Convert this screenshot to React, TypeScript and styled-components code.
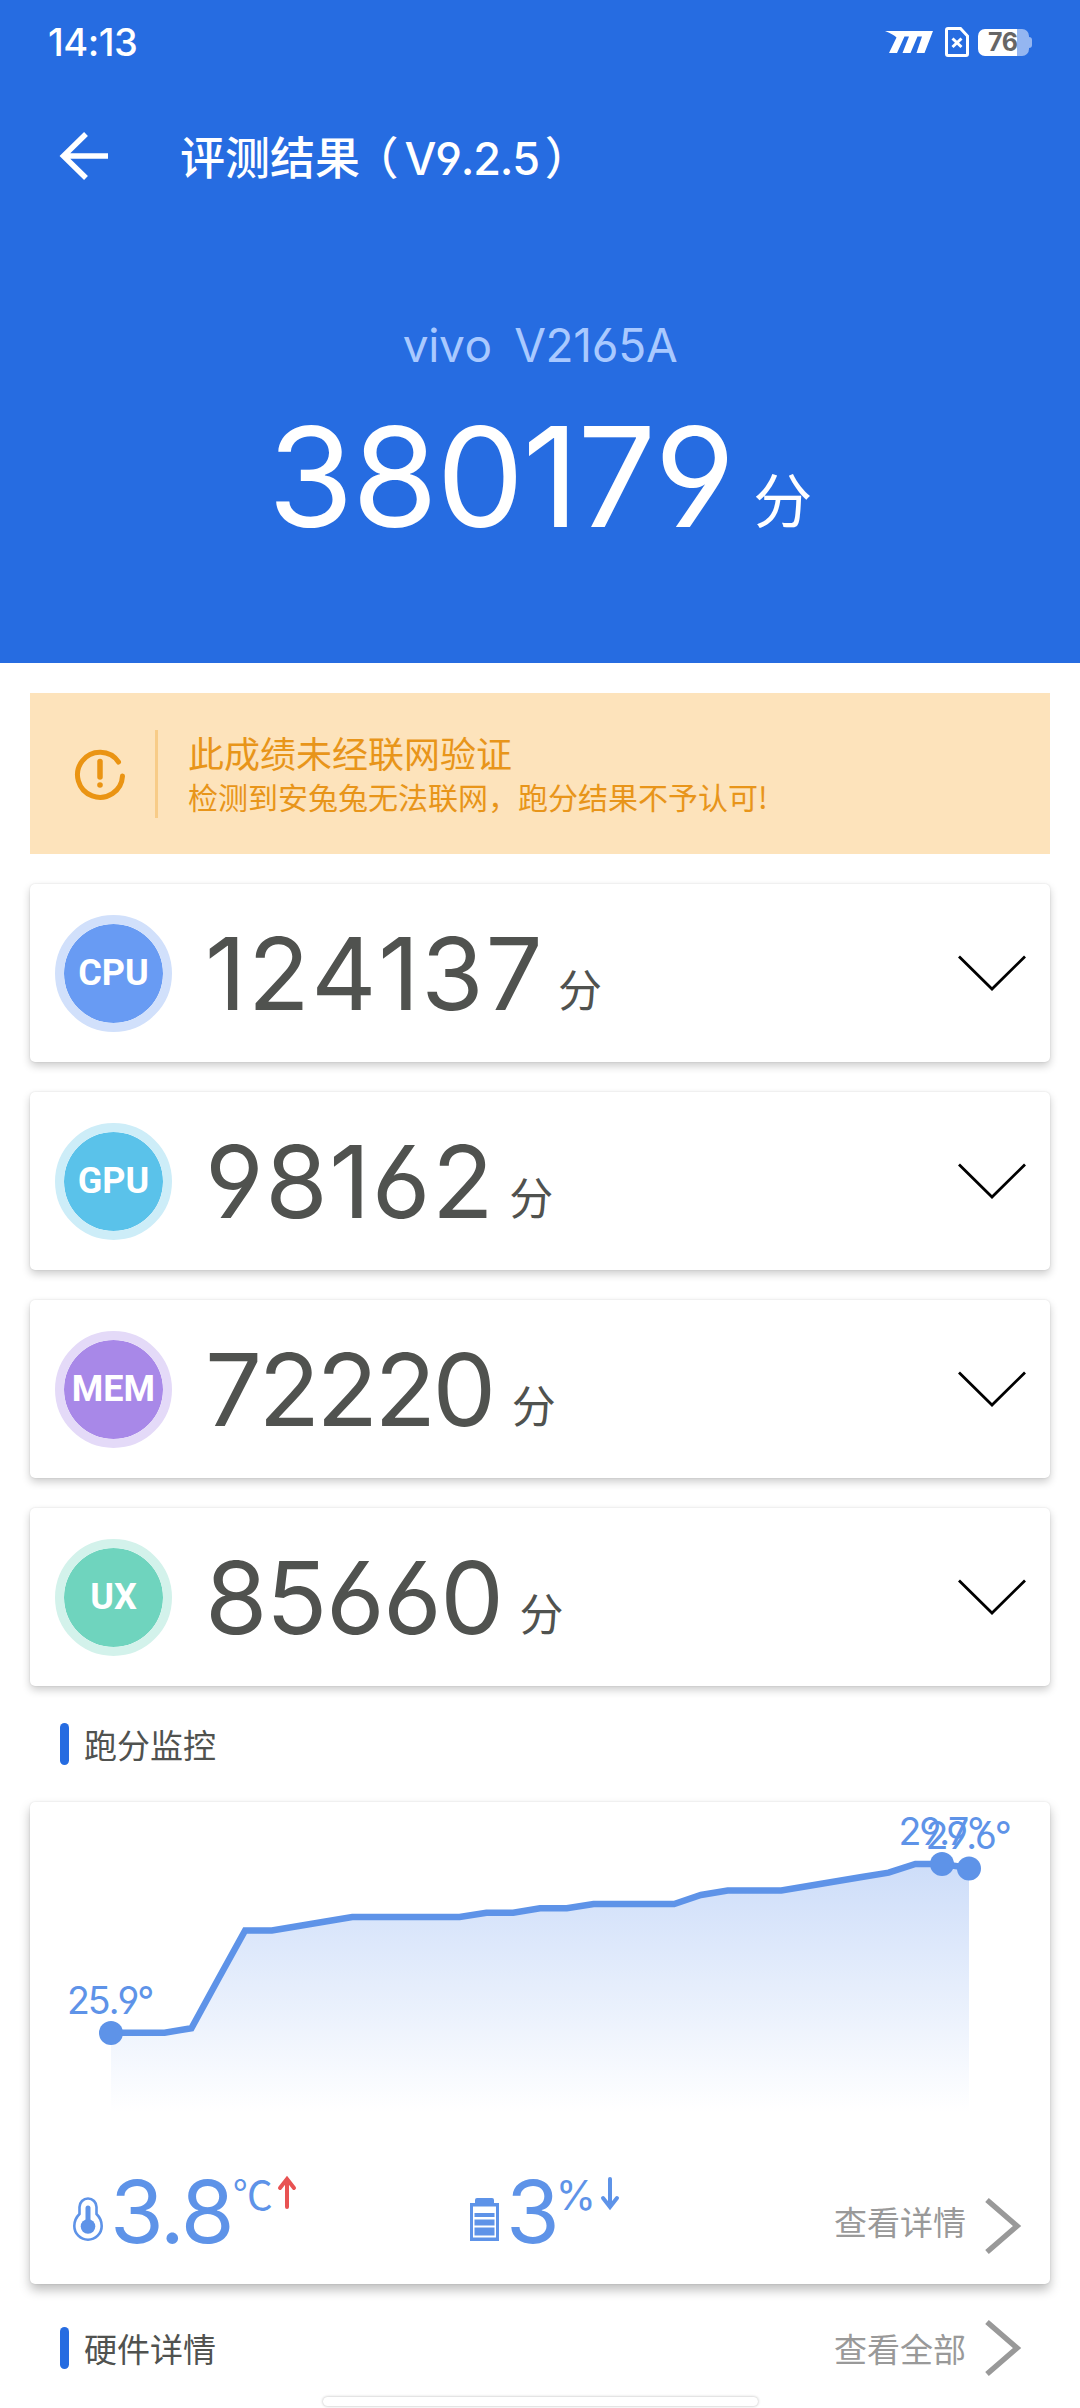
import React from 'react';
import styled, { createGlobalStyle } from 'styled-components';

const LATIN = `Inter, 'Noto Sans CJK SC', sans-serif`;
const HAN = `'Noto Sans CJK SC', sans-serif`;
const BLUE = '#266ce1';
const SOFT_BLUE = '#5e93e8';

const GlobalStyle = createGlobalStyle`
  body {
    margin: 0;
    background: #fff;
    font-family: ${LATIN};
    font-feature-settings: 'cv03', 'cv04';
    font-kerning: none;
    white-space: nowrap;
  }
  * { box-sizing: border-box; }
  svg { display: block; flex: none; overflow: visible; }
`;

const Screen = styled.div`
  width: 1080px;
  height: 2408px;
  overflow: hidden;
  display: flex;
  flex-direction: column;
`;

const Header = styled.header`
  height: 663px;
  background: ${BLUE};
  color: #fff;
`;

const StatusBar = styled.div`
  height: 84px;
  padding: 0 48px;
  display: flex;
  align-items: center;
  justify-content: space-between;
`;

const Clock = styled.span`
  font-size: 38px;
  font-weight: 500;
  letter-spacing: -0.5px;
`;

const StatusIcons = styled.div`
  display: flex;
  align-items: center;
`;

const SimIcon = styled.svg`
  margin: 0 9px 0 12px;
`;

const BatteryBody = styled.div`
  width: 51px;
  height: 27px;
  border-radius: 7px;
  background: linear-gradient(90deg, #fff 39px, #94b6f1 39px);
  color: #666;
  font: 700 25px/27px ${LATIN};
  letter-spacing: -0.5px;
  padding-left: 10px;
`;

const BatteryTip = styled.i`
  width: 3px;
  height: 11px;
  border-radius: 0 3px 3px 0;
  background: #94b6f1;
`;

const AppBar = styled.div`
  height: 149px;
  padding-left: 60px;
  display: flex;
  align-items: center;
`;

const BackIcon = styled.svg`
  margin: -6px 72px 0 0;
`;

const Title = styled.h1`
  margin: 0;
  font-size: 45px;
  font-weight: 500;
  line-height: 60px;
`;

const OpenParen = styled.span`
  margin-left: 16px;
  font-feature-settings: 'halt';
`;

const Version = styled.span`
  font-weight: 500;
  letter-spacing: -1.2px;
  margin: 0 6px 0 6px;
`;

const Device = styled.div`
  margin-top: 82px;
  height: 60px;
  line-height: 60px;
  font-size: 46px;
  letter-spacing: -0.3px;
  word-spacing: -1.5px;
  text-align: center;
  white-space: pre;
  color: #a9c9ff;
`;

const TotalScore = styled.div`
  margin-top: 32px;
  font-size: 139px;
  line-height: 140px;
  letter-spacing: -1.6px;
  text-align: center;
`;

const Unit = styled.span<{ $size: number; $gap: number }>`
  font-family: ${HAN};
  font-size: ${(p) => p.$size}px;
  line-height: 1;
  letter-spacing: 0;
  margin-left: ${(p) => p.$gap}px;
  vertical-align: 0.06em;
`;

const Banner = styled.section`
  margin: 30px 30px 0;
  height: 161px;
  padding-left: 45px;
  display: flex;
  align-items: center;
  background: #fde3bb;
  color: #e8951a;
  font-family: ${HAN};
`;

const BannerRule = styled.i`
  width: 3px;
  height: 88px;
  margin: 0 30px;
  background: #f8cc88;
`;

const BannerTitle = styled.div`
  font-size: 36px;
  line-height: 44px;
`;

const BannerText = styled.div`
  font-size: 30px;
  line-height: 44px;
`;

const Card = styled.section`
  margin: 30px 30px 0;
  border-radius: 5px;
  background: #fff;
  box-shadow: 0 0 2px rgba(0, 0, 0, 0.12), 0 4px 8px rgba(0, 0, 0, 0.2);
`;

const ScoreCard = styled(Card)`
  height: 178px;
  padding: 0 24px 0 25px;
  display: flex;
  align-items: center;
`;

const Badge = styled.div<{ $fill: string; $ring: string }>`
  width: 117px;
  height: 117px;
  border: 9px solid ${(p) => p.$ring};
  border-radius: 50%;
  background: ${(p) => p.$fill};
  background-clip: padding-box;
  color: #fff;
  font: 700 36px/99px Roboto, sans-serif;
  display: flex;
  justify-content: center;
`;

const Score = styled.div<{ $tracking: number }>`
  flex: 1;
  margin-left: 33px;
  font-size: 101px;
  line-height: 110px;
  letter-spacing: ${(p) => p.$tracking}px;
  color: #50524f;
`;

const SectionHead = styled.div<{ $top: number }>`
  height: 42px;
  margin: ${(p) => p.$top}px 30px 0;
  padding: 0 30px;
  display: flex;
  align-items: center;
  font: 33px/42px ${HAN};
  color: #50524f;
`;

const Marker = styled.i`
  width: 9px;
  height: 42px;
  margin-right: 15px;
  border-radius: 4.5px;
  background: ${BLUE};
`;

const More = styled.span<{ $top?: number }>`
  display: flex;
  align-items: center;
  gap: 19px;
  margin: ${(p) => p.$top ?? 0}px 0 0 auto;
  font: 33px/42px ${HAN};
  color: #999;
`;

const MoreLabel = styled.span<{ $lift?: number }>`
  padding-bottom: ${(p) => p.$lift ?? 0}px;
`;

const MonitorCard = styled(Card)`
  margin-top: 37px;
  height: 482px;
  box-shadow: 0 0 2px rgba(0, 0, 0, 0.12), 0 6px 11px rgba(0, 0, 0, 0.26);
`;

const Stats = styled.div`
  height: 120px;
  padding: 0 30px 0 43px;
  display: flex;
  align-items: center;
  color: ${SOFT_BLUE};
`;

const Stat = styled.div<{ $width: number }>`
  width: ${(p) => p.$width}px;
  height: 64px;
  display: flex;
  align-items: flex-start;
`;

const StatIcon = styled.svg`
  align-self: flex-end;
  margin: 0 7px 3px 0;
`;

const StatValue = styled.span`
  font-size: 87px;
  line-height: 64px;
  letter-spacing: -4px;
`;

const StatUnit = styled.span`
  font-size: 41px;
  line-height: 31px;
`;

const Celsius = styled.span`
  margin-left: 2px;
  font: 40px/27px ${HAN};
`;

const TrendIcon = styled.svg`
  margin: -3px 0 0 5px;
`;

const HomeBar = styled.div`
  width: 435px;
  height: 9px;
  margin: 28px auto 0;
  border-radius: 5px;
  background: #fff;
  box-shadow: 0 0 3px rgba(0, 0, 0, 0.3);
`;

const scores = [
  { label: 'CPU', value: '124137', tracking: 1.8, fill: '#689bf3', ring: '#d1e0fb' },
  { label: 'GPU', value: '98162', tracking: 1.5, fill: '#5ac2ea', ring: '#cdedf8' },
  { label: 'MEM', value: '72220', tracking: -3.6, fill: '#a888e8', ring: '#e4daf8' },
  { label: 'UX', value: '85660', tracking: -1.5, fill: '#6fd4be', ring: '#d3f2eb' },
];

// Temperature samples as chart heights, one sample per step.
const samples = [
  230.7, 230.7, 230.7, 226.2, 177, 128.5, 128.5, 124, 119.5, 115, 115, 115, 115, 115, 110.7, 110.7,
  106.3, 106.3, 102, 102, 102, 102, 93, 88.5, 88.5, 88.5, 84, 79.5, 75, 70.7, 62, 62, 66,
];
const STEP = 858 / 32;
const line = samples.map((y, i) => `${(81 + i * STEP).toFixed(1)},${y}`).join(' ');

const ChevronDown = () => (
  <svg width="68" height="36" viewBox="0 0 68 36" fill="none" stroke="#000" strokeWidth="2.8">
    <path d="M1 1.5 34 34 67 1.5" />
  </svg>
);

const ChevronRight = () => (
  <svg width="35" height="56" viewBox="0 0 35 56" fill="none" stroke="#999" strokeWidth="5.5">
    <path d="M2 2 32 28 2 54" />
  </svg>
);

const Chart = () => (
  <svg width="1020" height="350" viewBox="0 0 1020 350">
    <defs>
      <linearGradient id="area" gradientUnits="userSpaceOnUse" x1="0" y1="62" x2="0" y2="310">
        <stop offset="0" stopColor="#cdddf9" />
        <stop offset="1" stopColor="#fff" />
      </linearGradient>
    </defs>
    <polygon points={`81,310 ${line} 939,310`} fill="url(#area)" />
    <polyline points={line} fill="none" stroke={SOFT_BLUE} strokeWidth="6.5" />
    <g fill={SOFT_BLUE} fontSize="37.5" letterSpacing="-2">
      <circle cx="81" cy="231" r="12" />
      <circle cx="912" cy="62" r="12" />
      <circle cx="939" cy="66.5" r="12" />
      <text x="37" y="212">25.9°</text>
      <text x="868.5" y="42.5">29.7°</text>
      <text x="895.5" y="47">29.6°</text>
    </g>
  </svg>
);

export default function App() {
  return (
    <Screen>
      <GlobalStyle />
      <Header>
        <StatusBar>
          <Clock>14:13</Clock>
          <StatusIcons>
            <svg width="48" height="22" viewBox="0 0 48 22" fill="#fff">
              <path d="M0 0H48L39.5 22H31.500L37 5.500H32.500L25.500 22H17.500L24 5.500H19.500L12 22H4L11.500 6.500Q9 3.500 0 0Z" />
            </svg>
            <SimIcon width="24" height="30" viewBox="0 0 24 30" fill="none" stroke="#fff" strokeWidth="3">
              <path d="M3 1.500H15.500L22.500 9V27Q22.500 28.500 21 28.500H3Q1.500 28.500 1.500 27V3Q1.500 1.500 3 1.500Z" />
              <path d="M7.500 11.500 16.500 20M16.500 11.500 7.500 20" />
            </SimIcon>
            <BatteryBody>76</BatteryBody>
            <BatteryTip />
          </StatusIcons>
        </StatusBar>
        <AppBar>
          <BackIcon width="48" height="48" viewBox="0 0 48 48" fill="none" stroke="#fff" strokeWidth="5.500">
            <path d="M26 2 3.500 24 26 46M3.500 24H48" />
          </BackIcon>
          <Title>
            评测结果<OpenParen>（</OpenParen><Version>V9.2.5</Version>）
          </Title>
        </AppBar>
        <Device>{'vivo  V2165A'}</Device>
        <TotalScore>
          380179
          <Unit $size={59} $gap={19.5}>分</Unit>
        </TotalScore>
      </Header>

      <Banner>
        <svg width="50" height="50" viewBox="0 0 50 50" fill="none" stroke="#ea9413" strokeWidth="5" strokeLinecap="round">
          <path d="M43.500 13A22.500 22.500 0 1 0 47.500 27" />
          <path d="M25 12.500V28" strokeWidth="5.500" />
          <circle cx="25" cy="36" r="2.800" fill="#ea9413" stroke="none" />
        </svg>
        <BannerRule />
        <div>
          <BannerTitle>此成绩未经联网验证</BannerTitle>
          <BannerText>检测到安兔兔无法联网，跑分结果不予认可!</BannerText>
        </div>
      </Banner>

      {scores.map((s) => (
        <ScoreCard key={s.label}>
          <Badge $fill={s.fill} $ring={s.ring}>{s.label}</Badge>
          <Score $tracking={s.tracking}>
            {s.value}
            <Unit $size={44} $gap={15.5 - s.tracking}>分</Unit>
          </Score>
          <ChevronDown />
        </ScoreCard>
      ))}

      <SectionHead $top={37}>
        <Marker />
        跑分监控
      </SectionHead>
      <MonitorCard>
        <Chart />
        <Stats>
          <Stat $width={397}>
            <StatIcon width="30" height="44" viewBox="0 0 30 44" fill="none" stroke={SOFT_BLUE} strokeWidth="2.600">
              <path d="M6.500 10A8.500 8.500 0 0 1 23.500 10V17Q28.700 22 28.700 29A13.700 13.700 0 0 1 1.300 29Q1.300 22 6.500 17Z" />
              <path d="M15 11V26" strokeWidth="5" strokeLinecap="round" />
              <circle cx="15" cy="29.500" r="7.300" fill={SOFT_BLUE} stroke="none" />
            </StatIcon>
            <StatValue>3.8</StatValue>
            <Celsius>℃</Celsius>
            <TrendIcon width="18" height="32" viewBox="0 0 18 32" fill="none" stroke="#e85252" strokeWidth="4" strokeLinecap="round">
              <path d="M9 30V3M2 11 9 2 16 11" />
            </TrendIcon>
          </Stat>
          <Stat $width={300}>
            <StatIcon width="29" height="43" viewBox="0 0 29 43" fill={SOFT_BLUE}>
              <path d="M7 0H22Q24 0 24 2V5H29V43H0V5H5V2Q5 0 7 0ZM3 8.500V39.500H26V8.500Z" fillRule="evenodd" />
              <path d="M4.500 15H24.500V19H4.500ZM4.500 21.500H24.500V27.500H4.500ZM4.500 29.500H24.500V37.500H4.500Z" />
            </StatIcon>
            <StatValue>3</StatValue>
            <StatUnit>%</StatUnit>
            <TrendIcon width="18" height="32" viewBox="0 0 18 32" fill="none" stroke={SOFT_BLUE} strokeWidth="4" strokeLinecap="round">
              <path d="M9 2V29M2 21 9 30 16 21" />
            </TrendIcon>
          </Stat>
          <More $top={28}>
            <MoreLabel $lift={11}>查看详情</MoreLabel>
            <ChevronRight />
          </More>
        </Stats>
      </MonitorCard>
      <SectionHead $top={43}>
        <Marker />
        硬件详情
        <More>
          <MoreLabel>查看全部</MoreLabel>
          <ChevronRight />
        </More>
      </SectionHead>
      <HomeBar />
    </Screen>
  );
}
